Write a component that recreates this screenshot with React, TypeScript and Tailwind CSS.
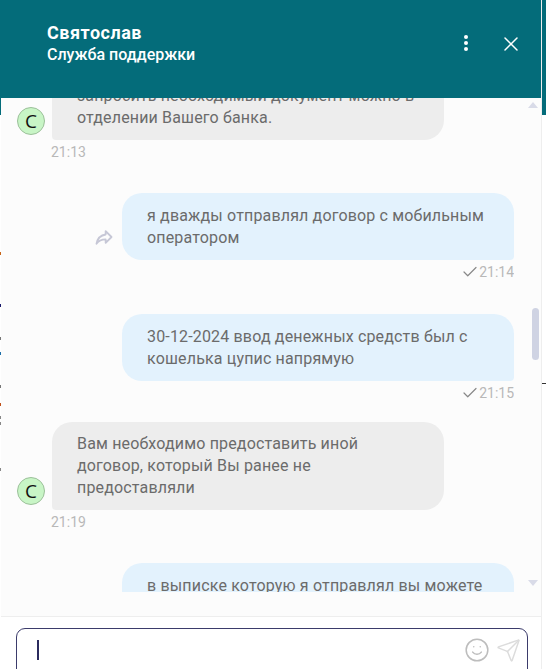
import { Check, Smile, Send, X } from 'lucide-react';

const edgeSpecks = [
  { top: 'top-[252px]', color: 'bg-[#c8661a]' },
  { top: 'top-[304px]', color: 'bg-[#1a1a6b]' },
  { top: 'top-[337px]', color: 'bg-[#777]' },
  { top: 'top-[352px]', color: 'bg-[#1d6fa8]' },
  { top: 'top-[385px]', color: 'bg-[#777]' },
  { top: 'top-[403px]', color: 'bg-[#c0501a]' },
  { top: 'top-[416px]', color: 'bg-[#888]' },
  { top: 'top-[422px]', color: 'bg-[#888]' },
  { top: 'top-[468px]', color: 'bg-[#888]' },
];

function Avatar() {
  return (
    <div className="mb-[5px] flex h-[28px] w-[28px] shrink-0 items-center justify-center rounded-full border border-[#9cc09a] bg-[#c8f5c6] font-['Open_Sans',sans-serif] text-[19px] leading-none text-[#111]">
      С
    </div>
  );
}

function Incoming({ lines, time, className }: { lines: string[]; time: string; className?: string }) {
  return (
    <div className={className}>
      <div className="flex items-end gap-[7px]">
        <Avatar />
        <div className="w-[392px] rounded-[20px] rounded-bl-[4px] bg-[#ededed] px-[25px] py-[11px] text-[16px] leading-[22px] tracking-[0.16px] text-[#6b6b6b]">
          {lines.map((l) => (
            <div key={l}>{l}</div>
          ))}
        </div>
      </div>
      <div className="mt-[2px] pl-[34px] text-[14px] leading-5 text-[#b8b8b8]">{time}</div>
    </div>
  );
}

function Outgoing({
  lines,
  time,
  forward,
  className,
}: {
  lines: string[];
  time?: string;
  forward?: boolean;
  className?: string;
}) {
  return (
    <div className={className}>
      <div className="flex items-end justify-end gap-[8px]">
        {forward && (
          <svg viewBox="0 0 24 24" className="mb-[13px] h-[20px] w-[20px]" fill="none" stroke="#c6c7d6" strokeWidth="2.2" strokeLinejoin="round">
            <path d="M14 9V5l7 7-7 7v-4.1c-5 0-8.5 1.6-11 5.1 1-5 4-10 11-11z" />
          </svg>
        )}
        <div className="w-[392px] rounded-[20px] rounded-br-[4px] bg-[#e3f2fd] px-[25px] py-[11.5px] text-[16px] leading-[22px] tracking-[0.16px] text-[#6b6b6b]">
          {lines.map((l) => (
            <div key={l}>{l}</div>
          ))}
        </div>
      </div>
      {time && (
        <div className="mt-[2px] flex items-center justify-end text-[14px] leading-5 text-[#b8b8b8]">
          <Check size={18} color="#888" strokeWidth={1.6} />
          {time}
        </div>
      )}
    </div>
  );
}

export default function App() {
  return (
    <div className="relative h-[669px] w-[546px] overflow-hidden bg-white font-['Roboto',sans-serif]">
      {/* page behind the widget, peeks out at the edges */}
      <div className="absolute inset-x-0 top-0 h-[115px] bg-[#046c7a]" />
      {edgeSpecks.map((s) => (
        <div key={s.top} className={`absolute left-0 h-[3px] w-px ${s.top} ${s.color}`} />
      ))}
      <div className="absolute right-0 top-[383px] h-px w-[4px] bg-[#333]" />

      <div className="relative ml-px mr-1 flex h-[669px] flex-col border-r border-[#eee] bg-[#fcfcfc]">
        <div className="flex h-[98px] shrink-0 items-center justify-between bg-[#046c7a] pl-[46px] pr-[18px] text-white">
          <div className="mt-[-11px]">
            <div className="text-[18px] font-bold leading-[22px] tracking-[0.5px]">Святослав</div>
            <div className="text-[16px] font-medium leading-[22px]">Служба поддержки</div>
          </div>
          <div className="mt-[-12px] flex items-center gap-[31px]">
            <div className="flex flex-col gap-[2px]">
              <span className="h-1 w-1 rounded-full bg-white" />
              <span className="h-1 w-1 rounded-full bg-white" />
              <span className="h-1 w-1 rounded-full bg-white" />
            </div>
            <X size={24} strokeWidth={1.5} className="mt-[2px]" />
          </div>
        </div>

        <div className="flex h-[494px] shrink-0">
          <div className="w-[514px] overflow-hidden pl-4">
            <div className="mt-[-24px]">
              <Incoming lines={['запросить необходимый документ можно в', 'отделении Вашего банка.']} time="21:13" />
              <Outgoing
                className="mt-[31px]"
                forward
                lines={['я дважды отправлял договор с мобильным', 'оператором']}
                time="21:14"
              />
              <Outgoing
                className="mt-[32px]"
                lines={['30-12-2024 ввод денежных средств был с', 'кошелька цупис напрямую']}
                time="21:15"
              />
              <Incoming
                className="mt-[19px]"
                lines={['Вам необходимо предоставить иной', 'договор, который Вы ранее не', 'предоставляли']}
                time="21:19"
              />
              <Outgoing
                className="mt-[31px]"
                lines={['в выписке которую я отправлял вы можете', 'увидеть все операции']}
              />
            </div>
          </div>
          <div className="flex w-[27px] flex-col items-end pr-[2px] pt-[4px]">
            <div className="mr-px h-0 w-0 border-x-[5px] border-b-[6px] border-x-transparent border-b-[#d9dbe8]" />
            <div className="mt-[200px] h-[52px] w-[7px] rounded-[4px] bg-[#cfd3e3]" />
            <div className="mr-px mt-[220px] h-0 w-0 border-x-[5px] border-t-[6px] border-x-transparent border-t-[#d9dbe8]" />
          </div>
        </div>

        <div className="mt-[24px] flex-1 border-t border-[#eee] bg-white pl-[15px] pr-[13px] pt-[11px]">
          <div className="flex h-[60px] items-start rounded-t-[9px] border border-[#3b3b6b] pl-[20px] pr-[6px] pt-[8px]">
            <div className="mt-[3px] h-[20px] w-[1.5px] bg-[#2b2b5e]" />
            <div className="ml-auto flex items-center gap-[6px]">
              <Smile size={26} color="#bdbdbd" strokeWidth={1.4} />
              <Send size={25} color="#dcdcdc" strokeWidth={1.4} />
            </div>
          </div>
        </div>
      </div>
    </div>
  );
}
